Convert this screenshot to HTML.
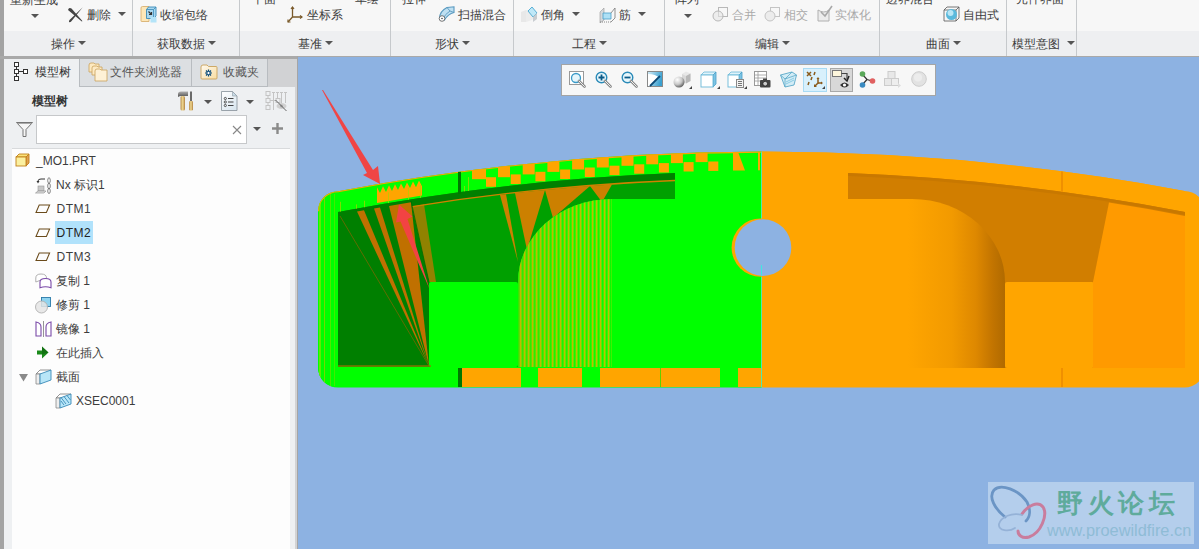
<!DOCTYPE html>
<html><head><meta charset="utf-8">
<style>
*{margin:0;padding:0;box-sizing:border-box}
html,body{width:1199px;height:549px;overflow:hidden;background:#8db2e2;font-family:"Liberation Sans",sans-serif;font-size:12px;color:#3c3c3c}
.a{position:absolute}
.t{position:absolute;white-space:nowrap;line-height:14px;font-size:12px}
.sep{position:absolute;top:0;width:1px;height:56px;background:#c6c9cc}
.dd{position:absolute;width:0;height:0;border-left:4px solid transparent;border-right:4px solid transparent;border-top:4px solid #555}
</style></head><body>
<!-- ribbon -->
<div class="a" style="left:0;top:0;width:1199px;height:31px;background:#f7f7f7"></div>
<div class="a" style="left:0;top:31px;width:1199px;height:25px;background:#eeeff1"></div>
<div class="a" style="left:0;top:56px;width:1199px;height:1px;background:#a9a9a9"></div>
<div class="a" style="left:0;top:0;width:4px;height:549px;background:#a3a3a3"></div>


<!-- ribbon content -->
<div class="sep" style="left:132px"></div>
<div class="sep" style="left:239px"></div>
<div class="sep" style="left:390px"></div>
<div class="sep" style="left:513px"></div>
<div class="sep" style="left:664px"></div>
<div class="sep" style="left:879px"></div>
<div class="sep" style="left:1006px"></div>
<div class="sep" style="left:1076px"></div>

<div class="t" style="left:10px;top:-7px">重新生成</div>
<div class="dd" style="left:31px;top:14px"></div>
<svg class="a" style="left:67px;top:6px" width="17" height="17" viewBox="0 0 17 17"><path d="M1.2 3.2 Q2.5 1 4.5 2.5 L15.2 14.8 Q15.5 15.8 14.5 15.2 L2.2 5 Q0.8 4.2 1.2 3.2Z" fill="#444"/><path d="M15.8 1.2 L3.8 12.8 Q1.2 15.2 2.2 16 Q3.5 16.8 5.2 14.2 Z" fill="#444"/></svg>
<div class="t" style="left:87px;top:8px">删除</div>
<div class="dd" style="left:118px;top:12px"></div>

<svg class="a" style="left:140px;top:5px" width="17" height="18" viewBox="0 0 17 18"><path d="M1 3 Q1 1.5 2.5 1.5 L9 1.5 L9 16.5 L1.5 16.5 Q1 16.5 1 16Z" fill="#fde7b8" stroke="#d8b070" stroke-width="0.9"/><path d="M6.5 4.5 L8.5 2 L16 2 L16 11 L13.5 13.5 L6.5 13.5Z" fill="#a8d8f0" stroke="#3a8ab8" stroke-width="0.9"/><path d="M6.5 4.5 L13.5 4.5 L13.5 13.5 M13.5 4.5 L16 2" fill="none" stroke="#3a8ab8" stroke-width="0.8"/><path d="M8.5 6.5 L11.5 9.5 M11.5 7 L11.5 9.5 L9 9.5" stroke="#333" stroke-width="1.2" fill="none"/><rect x="10.5" y="12" width="6" height="5.5" fill="#b4e4f8"/></svg>
<div class="t" style="left:160px;top:8px">收缩包络</div>

<div class="t" style="left:252px;top:-8px">平面</div>
<div class="t" style="left:355px;top:-8px">草绘</div>
<svg class="a" style="left:287px;top:6px" width="17" height="17" viewBox="0 0 17 17"><path d="M5.5 1 L5.5 11 L15 11 M5.5 11 L1 16" stroke="#7a5a2a" stroke-width="1.3" fill="none"/><path d="M4 3 L5.5 1 L7 3 M13 9.5 L15 11 L13 12.5 M1 13.5 L1 16 L3.5 16" stroke="#7a5a2a" stroke-width="1.2" fill="none"/></svg>
<div class="t" style="left:307px;top:8px">坐标系</div>

<div class="t" style="left:402px;top:-8px">拉伸</div>
<svg class="a" style="left:438px;top:6px" width="17" height="16" viewBox="0 0 17 16"><path d="M1.5 12 Q2 5 9 1.5 L16 0.8 L16 6.5 Q10 8 6.5 14Z" fill="#bfe0f2" stroke="#5a9ac0" stroke-width="1.1"/><path d="M9 1.5 L12 5 L16 6.5 M12 5 Q7 8 5 13" fill="none" stroke="#5a9ac0" stroke-width="0.9"/><circle cx="4" cy="12.5" r="2.8" fill="#fff" stroke="#666" stroke-width="0.9"/><circle cx="4" cy="12.5" r="0.7" fill="#222"/></svg>
<div class="t" style="left:458px;top:8px">扫描混合</div>

<svg class="a" style="left:520px;top:6px" width="18" height="17" viewBox="0 0 18 17"><path d="M1 6 L6 4 L6 16 L1 16Z" fill="#e8e8e8"/><path d="M6 4 L13 4 L17 9 L12 14 L6 16Z" fill="#ececec"/><path d="M8 5 L12 1 L17 7 L13 11Z" fill="#bfe8f8" stroke="#4aa8d0" stroke-width="0.9"/><path d="M13 11 L17 7 L17 13 L13 16Z" fill="#c8ccd0"/></svg>
<div class="t" style="left:541px;top:8px">倒角</div>
<div class="dd" style="left:572px;top:12px"></div>
<svg class="a" style="left:599px;top:6px" width="17" height="17" viewBox="0 0 17 17"><path d="M1 6 L5 2 L5 14 L1 17Z" fill="#d5d8db" stroke="#999" stroke-width="0.6"/><path d="M4 7 L12 7 L12 13 L4 13Z" fill="#aee0f5" stroke="#4aa0c8" stroke-width="0.8"/><path d="M12 7 L16 2 L16 12 L12 16" fill="none" stroke="#777" stroke-width="0.8"/><path d="M1 16 L12 16" stroke="#888" stroke-dasharray="1 1"/></svg>
<div class="t" style="left:619px;top:8px">筋</div>
<div class="dd" style="left:638px;top:12px"></div>

<div class="t" style="left:675px;top:-8px">阵列</div>
<div class="dd" style="left:684px;top:14px"></div>
<svg class="a" style="left:712px;top:6px" width="17" height="16" viewBox="0 0 17 16"><rect x="6.5" y="1.5" width="9" height="9" fill="none" stroke="#b8b8b8"/><circle cx="6" cy="10" r="5" fill="#e6e6e6" fill-opacity="0.6" stroke="#b8b8b8"/></svg>
<div class="t" style="left:732px;top:8px;color:#a9a9a9">合并</div>
<svg class="a" style="left:764px;top:6px" width="17" height="16" viewBox="0 0 17 16"><rect x="6.5" y="1.5" width="9" height="9" fill="none" stroke="#c4c4c4"/><circle cx="6" cy="10" r="5" fill="#ececec" stroke="#c4c4c4"/></svg>
<div class="t" style="left:784px;top:8px;color:#a9a9a9">相交</div>
<svg class="a" style="left:816px;top:5px" width="17" height="17" viewBox="0 0 17 17"><path d="M2 5 L2 16 L13 16 L13 5 Q8 9 2 5Z" fill="#ececec" stroke="#b0b0b0"/><path d="M5 7 L9 11 L16 1" stroke="#a8a8a8" stroke-width="1.6" fill="none"/></svg>
<div class="t" style="left:835px;top:8px;color:#a9a9a9">实体化</div>

<div class="t" style="left:886px;top:-8px">边界混合</div>
<svg class="a" style="left:943px;top:6px" width="17" height="16" viewBox="0 0 17 16"><path d="M1 4 L4 1 L16 1 L16 12 L13 15 L1 15Z M1 4 L13 4 L13 15 M13 4 L16 1" fill="none" stroke="#555" stroke-width="0.8"/><circle cx="8.5" cy="8.5" r="5.5" fill="#5ab9dc"/><circle cx="7.5" cy="7" r="3" fill="#b9e6f5"/></svg>
<div class="t" style="left:963px;top:8px">自由式</div>

<div class="t" style="left:1016px;top:-8px">元件界面</div>

<div class="t" style="left:51px;top:37px">操作</div><div class="dd" style="left:78px;top:41px"></div>
<div class="t" style="left:157px;top:37px">获取数据</div><div class="dd" style="left:208px;top:41px"></div>
<div class="t" style="left:298px;top:37px">基准</div><div class="dd" style="left:325px;top:41px"></div>
<div class="t" style="left:435px;top:37px">形状</div><div class="dd" style="left:462px;top:41px"></div>
<div class="t" style="left:572px;top:37px">工程</div><div class="dd" style="left:599px;top:41px"></div>
<div class="t" style="left:755px;top:37px">编辑</div><div class="dd" style="left:782px;top:41px"></div>
<div class="t" style="left:926px;top:37px">曲面</div><div class="dd" style="left:953px;top:41px"></div>
<div class="t" style="left:1012px;top:37px">模型意图</div><div class="dd" style="left:1067px;top:41px"></div>

<!-- left panel -->
<div class="a" style="left:4px;top:56px;width:294px;height:493px;background:#eef0f2"></div>
<div class="a" style="left:0;top:56px;width:298px;height:3px;background:#a9a9a9"></div>
<div class="a" style="left:295px;top:86px;width:2px;height:463px;background:#d2d3d5"></div>
<div class="a" style="left:297px;top:56px;width:1px;height:493px;background:#a5a5a5"></div>
<div class="a" style="left:12px;top:148px;width:278px;height:401px;background:#fdfdfd;border-top:1px solid #d8dadc"></div>


<!-- tabs -->
<div class="a" style="left:79px;top:59px;width:112px;height:28px;background:#dcdfe2;border-left:1px solid #b8bcc0;border-bottom:1px solid #b8bcc0"></div>
<div class="a" style="left:191px;top:59px;width:77px;height:28px;background:#dcdfe2;border-left:1px solid #b8bcc0;border-bottom:1px solid #b8bcc0;border-right:1px solid #b8bcc0"></div>
<div class="a" style="left:268px;top:59px;width:29px;height:28px;background:#d1d2d4"></div>
<svg class="a" style="left:14px;top:62px" width="15" height="20" viewBox="0 0 15 20"><g fill="#fff" stroke="#333" stroke-width="1"><rect x="0.5" y="0.5" width="4" height="4"/><rect x="0.5" y="7.5" width="4" height="4"/><rect x="0.5" y="14.5" width="4" height="4"/><rect x="9.5" y="7.5" width="4" height="4"/></g><path d="M2.5 4.5 V7.5 M2.5 11.5 V14.5 M4.5 9.5 H9.5" stroke="#333"/></svg>
<div class="t" style="left:35px;top:65px;color:#333">模型树</div>
<svg class="a" style="left:88px;top:62px" width="20" height="20" viewBox="0 0 20 20"><g stroke="#c9a15a" stroke-width="0.8"><path d="M1 3 Q1 1 3 1 L6 1 L7 2 L11 2 L11 10 L1 10Z" fill="#fde9c0"/><path d="M4 6 Q4 4 6 4 L9 4 L10 5 L14 5 L14 13 L4 13Z" fill="#fdeac4"/><path d="M7 9 Q7 7 9 7 L12 7 L13 8 L19 8 L19 19 L7 19Z" fill="#fef1d6"/></g></svg>
<div class="t" style="left:110px;top:65px;color:#555">文件夹浏览器</div>
<svg class="a" style="left:200px;top:64px" width="18" height="16" viewBox="0 0 18 16"><defs><linearGradient id="fd" x1="0" y1="0" x2="1" y2="1"><stop offset="0" stop-color="#fffaf0"/><stop offset="1" stop-color="#f8dca0"/></linearGradient></defs><path d="M1 3 Q1 1 3 1 L7 1 L8.5 2.5 L16 2.5 Q17 2.5 17 3.5 L17 14 Q17 15 16 15 L2 15 Q1 15 1 14Z" fill="url(#fd)" stroke="#c9a15a" stroke-width="0.9"/><g stroke="#0a4a78" stroke-width="1.2"><path d="M8.5 5.5 V12.5 M5 9 H12 M6 6.5 L11 11.5 M11 6.5 L6 11.5"/></g><circle cx="8.5" cy="9" r="1.6" fill="#fff" stroke="#0a4a78" stroke-width="0.8"/></svg>
<div class="t" style="left:223px;top:65px;color:#555">收藏夹</div>

<div class="t" style="left:32px;top:94px;color:#333;font-weight:bold">模型树</div>
<svg class="a" style="left:177px;top:91px" width="18" height="20" viewBox="0 0 18 20"><defs><linearGradient id="wd" x1="0" y1="0" x2="1" y2="0"><stop offset="0" stop-color="#b89050"/><stop offset="0.5" stop-color="#f0d890"/><stop offset="1" stop-color="#b08040"/></linearGradient><linearGradient id="hm" x1="0" y1="0" x2="0" y2="1"><stop offset="0" stop-color="#b0b0b0"/><stop offset="1" stop-color="#505050"/></linearGradient></defs><path d="M1 3 Q1 0.5 4 0.5 L11 0.5 L11 5 L4 5 Q2.5 5 1 6Z" fill="url(#hm)"/><rect x="3.5" y="5" width="4.5" height="14.5" rx="1.5" fill="url(#wd)"/><rect x="13" y="0.5" width="2" height="10" fill="#6a6a6a"/><rect x="12" y="10" width="4" height="9.5" rx="1.2" fill="url(#wd)"/></svg>
<div class="dd" style="left:204px;top:100px"></div>
<svg class="a" style="left:221px;top:91px" width="17" height="21" viewBox="0 0 17 21"><defs><linearGradient id="pg" x1="0" y1="0" x2="0.6" y2="1"><stop offset="0" stop-color="#ffffff"/><stop offset="1" stop-color="#dce8f0"/></linearGradient></defs><path d="M0.5 0.5 L11.5 0.5 L16 5 L16 19.5 L0.5 19.5Z" fill="url(#pg)" stroke="#909aa2" stroke-width="0.9"/><path d="M11.5 0.5 L11.5 5 L16 5Z" fill="#c8dce8" stroke="#909aa2" stroke-width="0.6"/><g fill="none" stroke="#444" stroke-width="0.9"><circle cx="4.3" cy="7.5" r="1.1"/><circle cx="4.3" cy="11" r="1.1"/><circle cx="4.3" cy="14.5" r="1.1"/></g><path d="M7 7.5 H12.5 M7 11 H12.5 M7 14.5 H12.5" stroke="#444" stroke-width="1.1"/></svg>
<div class="dd" style="left:246px;top:100px"></div>
<svg class="a" style="left:265px;top:91px" width="23" height="21" viewBox="0 0 23 21"><g fill="none" stroke="#c4c4c4" stroke-width="1"><rect x="1" y="0.5" width="4" height="4"/><rect x="1" y="7.5" width="4" height="4"/><rect x="1" y="14.5" width="4" height="4"/><rect x="11" y="7.5" width="4" height="4"/><path d="M3 4.5 V7.5 M3 11.5 V14.5 M5 9.5 H11 M8.5 1.5 V19 M7 1.5 H10 M12.5 1.5 V7 M11 1.5 H14 M16.5 1.5 V12 M15 1.5 H18 M20.5 1.5 V12 M19 1.5 H22"/></g><ellipse cx="16.5" cy="15" rx="5" ry="3" fill="#d0d0d0"/><circle cx="16.5" cy="15" r="1.5" fill="#a8a8a8"/><path d="M10.5 9 L21.5 20" stroke="#555" stroke-width="0.9"/></svg>

<svg class="a" style="left:16px;top:122px" width="17" height="15" viewBox="0 0 17 15"><path d="M0.5 0.5 L16.5 0.5 L10 7.5 L10 14.5 L7 14.5 L7 7.5Z" fill="#f6f6f6" stroke="#666" stroke-width="0.9"/><path d="M1.5 1.5 L15.5 1.5" stroke="#aaa"/></svg>
<div class="a" style="left:36px;top:115px;width:211px;height:29px;background:#fff;border:1px solid #c6c8ca"></div>
<svg class="a" style="left:232px;top:125px" width="10" height="10" viewBox="0 0 10 10"><path d="M1 1 L9 9 M9 1 L1 9" stroke="#888" stroke-width="1.1"/></svg>
<div class="dd" style="left:253px;top:127px"></div>
<svg class="a" style="left:272px;top:123px" width="11" height="11" viewBox="0 0 11 11"><path d="M5.5 0 V11 M0 5.5 H11" stroke="#8a8a8a" stroke-width="2.4"/></svg>

<!-- tree -->
<svg class="a" style="left:15px;top:153px" width="15" height="14" viewBox="0 0 15 14"><path d="M1 4 L4 1 L14 1 L11 4Z" fill="#fbe37a" stroke="#c0801a" stroke-width="0.9"/><path d="M11 4 L14 1 L14 10 L11 13Z" fill="#e0a050" stroke="#c0801a" stroke-width="0.9"/><rect x="1" y="4" width="10" height="9" fill="#fbf0a0" stroke="#c0801a" stroke-width="0.9"/></svg>
<div class="t" style="left:36px;top:154px">_MO1.PRT</div>

<svg class="a" style="left:35px;top:177px" width="17" height="17" viewBox="0 0 17 17"><path d="M3 4 Q3 2 6 2 L10 2" fill="none" stroke="#333" stroke-width="1"/><path d="M1.5 4 L3 6.5 L4.5 4Z" fill="#333"/><rect x="3" y="9" width="6" height="5" fill="#c8c8c8" stroke="#999" stroke-width="0.6"/><path d="M0.5 16 L3 14 L11 14 L9 16Z" fill="#e0e0e0" stroke="#888" stroke-width="0.6"/><g fill="none" stroke="#666" stroke-width="0.8"><ellipse cx="14" cy="3.5" rx="1.3" ry="2.8"/><ellipse cx="14" cy="9" rx="1.3" ry="2.8"/><ellipse cx="14" cy="14" rx="1.3" ry="2.5"/></g></svg>
<div class="t" style="left:56px;top:178px">Nx 标识1</div>

<svg class="a" style="left:35px;top:204px" width="16" height="10" viewBox="0 0 16 10"><path d="M4.2 1 L14.6 1 L11.4 8.5 L1 8.5Z" fill="none" stroke="#6a4a1a" stroke-width="1.05"/></svg>
<div class="t" style="left:56.5px;top:202px;letter-spacing:0.5px">DTM1</div>
<div class="a" style="left:55px;top:221px;width:38px;height:23px;background:#b1e2fb"></div>
<svg class="a" style="left:35px;top:228px" width="16" height="10" viewBox="0 0 16 10"><path d="M4.2 1 L14.6 1 L11.4 8.5 L1 8.5Z" fill="none" stroke="#6a4a1a" stroke-width="1.05"/></svg>
<div class="t" style="left:56.5px;top:226px;color:#222;letter-spacing:0.5px">DTM2</div>
<svg class="a" style="left:35px;top:252px" width="16" height="10" viewBox="0 0 16 10"><path d="M4.2 1 L14.6 1 L11.4 8.5 L1 8.5Z" fill="none" stroke="#6a4a1a" stroke-width="1.05"/></svg>
<div class="t" style="left:56.5px;top:250px;letter-spacing:0.5px">DTM3</div>

<svg class="a" style="left:35px;top:273px" width="17" height="16" viewBox="0 0 17 16"><path d="M0.8 9 L0.8 5 Q0.8 1 6 1 Q11.5 1 11.5 5 L11.5 7 Q6 6 0.8 9Z" fill="#fff" stroke="#a8a8a8" stroke-width="0.9"/><path d="M5 14.8 L5 9 Q5 5.5 10.5 5.5 Q16 5.5 16 9 L16 14.8 Q10.5 12.8 5 14.8Z" fill="#fff" stroke="#7a4aa8" stroke-width="1.1"/></svg>
<div class="t" style="left:56px;top:274px">复制 1</div>
<svg class="a" style="left:35px;top:297px" width="17" height="17" viewBox="0 0 17 17"><rect x="6.5" y="0.5" width="9" height="9" fill="#8fd4f0" stroke="#2a7aa8" stroke-width="0.9"/><circle cx="6.5" cy="10" r="6" fill="#e4e4e4" fill-opacity="0.85" stroke="#b0b0b0" stroke-width="0.9"/></svg>
<div class="t" style="left:56px;top:298px">修剪 1</div>
<svg class="a" style="left:35px;top:321px" width="17" height="16" viewBox="0 0 17 16"><path d="M1 1 L1 15 L6 15 L6 6 Q6 2 1 1Z M16 1 L16 15 L11 15 L11 6 Q11 2 16 1Z" fill="#fff" stroke="#7a4aa8" stroke-width="1.1"/><path d="M8.5 0 V16" stroke="#888" stroke-width="0.9"/></svg>
<div class="t" style="left:56px;top:322px">镜像 1</div>
<svg class="a" style="left:37px;top:346px" width="12" height="13" viewBox="0 0 12 13"><path d="M0 4.5 L5 4.5 L5 0.5 L11.5 6.5 L5 12.5 L5 8.5 L0 8.5Z" fill="#1a8a1a"/><path d="M5 0.5 L11.5 6.5 L5 8.5Z" fill="#0a5a0a" opacity="0.5"/></svg>
<div class="t" style="left:56px;top:346px">在此插入</div>

<svg class="a" style="left:19px;top:374px" width="10" height="8" viewBox="0 0 10 8"><path d="M0 0 L9 0 L4.5 7.5Z" fill="#8a8a8a"/></svg>
<svg class="a" style="left:35px;top:369px" width="17" height="16" viewBox="0 0 17 16"><path d="M1 5 L5 1 L16 1 L12 5Z" fill="#fff" stroke="#777" stroke-width="0.8"/><path d="M1 5 L5 5 L5 15 L1 15Z" fill="#eee" stroke="#888" stroke-width="0.8"/><path d="M5 5 L16 1 L16 11 L5 15Z" fill="#b8e6f8" stroke="#3a8ab8" stroke-width="0.9"/></svg>
<div class="t" style="left:56px;top:370px">截面</div>
<svg class="a" style="left:55px;top:393px" width="17" height="16" viewBox="0 0 17 16"><path d="M1 5 L5 1 L16 1 L12 5Z" fill="#fff" stroke="#777" stroke-width="0.8"/><path d="M1 5 L5 5 L5 15 L1 15Z" fill="#eee" stroke="#888" stroke-width="0.8"/><path d="M5 5 L16 1 L16 11 L5 15Z" fill="#b8e6f8" stroke="#3a8ab8" stroke-width="0.9"/><path d="M6 8 L9 12 M6 4.5 L11 11 M9 3.5 L14 10 M12 2.5 L15.5 7" stroke="#3a8ab8" stroke-width="0.9"/></svg>
<div class="t" style="left:76px;top:394px">XSEC0001</div>

<!-- viewport -->
<div class="a" style="left:298px;top:57px;width:901px;height:492px;background:#8db2e2"></div>

<!-- model -->
<svg class="a" style="left:0;top:0" width="1199" height="549" viewBox="0 0 1199 549">
<defs>
<clipPath id="bc"><path d="M318,367 L318,211.2 A20,20 0 0 1 338,191.2 Q761.2,112.2 1184.5,190.9 A20,20 0 0 1 1204.5,210.9 L1204.5,367.5 A20,20 0 0 1 1184.5,387.5 L338,387.5 A20,20 0 0 1 318,367.5 Z"/></clipPath>
<linearGradient id="fg" x1="762" y1="0" x2="1005" y2="0" gradientUnits="userSpaceOnUse"><stop offset="0" stop-color="#ffa500"/><stop offset="0.6" stop-color="#ffa500"/><stop offset="0.78" stop-color="#f29a00"/><stop offset="0.88" stop-color="#de8800"/><stop offset="0.95" stop-color="#c27400"/><stop offset="1" stop-color="#b06a00"/></linearGradient>
<pattern id="st" x="516" y="0" width="4" height="10" patternUnits="userSpaceOnUse"><rect width="4" height="10" fill="#08fc00"/><rect x="0" width="1" height="10" fill="#c0c000"/><rect x="1" width="1" height="10" fill="#60e800"/><rect x="3" width="1" height="10" fill="#40f000"/></pattern>
<linearGradient id="fo" x1="518" y1="0" x2="612" y2="0" gradientUnits="userSpaceOnUse"><stop offset="0" stop-color="#c8a000" stop-opacity="0.25"/><stop offset="0.5" stop-color="#b0b000" stop-opacity="0.1"/><stop offset="1" stop-color="#a0c000" stop-opacity="0"/></linearGradient>
</defs>
<g clip-path="url(#bc)">
<rect x="300" y="100" width="462" height="300" fill="#00ff00"/>
<rect x="762" y="100" width="450" height="300" fill="#ffa500"/>
<path d="M318,211.2 A20,20 0 0 1 338,191.2 Q761.2,112.2 1184.5,190.9" fill="none" stroke="#ffa500" stroke-width="2"/>
<path d="M848,173 Q1016.5,179.6 1185,211.9 L1185,368 L848,368 Z" fill="#d17e00"/>
<path d="M848,173 Q1016.5,179.6 1185,211.9 L1185,214.9 Q1016.5,182.6 848,176 Z" fill="#c87800"/>
<path d="M762,199 L912,199 A93,83 0 0 1 1005,282 L1005,368 L762,368 Z" fill="url(#fg)"/>
<rect x="1005" y="282" width="89" height="86" rx="2" fill="#ffa500"/>
<path d="M1109,202.6 Q1147,208.6 1185,215.9 L1185,368 L1093,368 L1093,282 Z" fill="#ff9a00"/>
<rect x="1061" y="368" width="2" height="19" fill="#f09000"/>
<rect x="1061" y="171.4" width="2" height="20.3" fill="#f09000"/>
<path d="M338,212.1 Q506.5,179.7 675,173 L675,368 L338,368 Z" fill="#00a000"/>
<path d="M500,194.9 L506,194.2 L518,262 Z" fill="#cc8000"/>
<path d="M515,193.1 L545,190 L527,250 Z" fill="#cc8000"/>
<path d="M545,190 L590,186 L553,218 Z" fill="#cc8000"/>
<path d="M590,186 L612,184.4 L602,202 Z" fill="#cc8000"/>
<path d="M411,206.3 L424,204.2 L436,282 L429,282 Z" fill="#c07800" opacity="0.75"/>
<path d="M338,212.1 Q506.5,179.7 675,173 L675,180 Q506.5,186.7 338,219.1 Z" fill="#007f00"/>
<path d="M411,206.8 Q543,185.7 675,180.5" fill="none" stroke="#d08000" stroke-width="1.3"/>
<path d="M762,199 L612,199 A94,83 0 0 0 518,282 L518,368 L762,368 Z" fill="#00ff00"/>
<path d="M612,199 A94,83 0 0 0 518,282 L518,368 L612,368 Z" fill="url(#st)"/>
<path d="M612,199 A94,83 0 0 0 518,282 L518,368 L612,368 Z" fill="url(#fo)"/>
<path d="M338,215.1 L411,202.3 L429,282 L429,366 L338,366 Z" fill="#007f00"/>
<path d="M429,366 L357,211.5 L364,210.3 Z" fill="#c07000"/>
<path d="M429,366 L374,208.5 L380,207.4 Z" fill="#c07000"/>
<path d="M429,366 L389,205.9 L411,202.3 Z" fill="#c07000"/>
<path d="M429,366 L340,216" stroke="#a06000" stroke-width="0.6"/>
<path d="M429,282 L411,201" stroke="#006a00" stroke-width="0.8"/>
<rect x="429" y="282" width="89" height="85" rx="2" fill="#00ff00"/>
<rect x="338" y="365" width="93" height="2" fill="#a07000" opacity="0.6"/>
<path d="M399,204.5 L412.5,216.5 L407.5,219 L429.5,289 L400.5,221.5 L396,222.5 Z" fill="#f24343"/>
<rect x="318" y="367" width="444" height="20" fill="#00ff00"/>
<rect x="462" y="368" width="59" height="19" fill="#ffa500"/>
<rect x="538" y="368" width="44" height="19" fill="#ffa500"/>
<rect x="600" y="368" width="60" height="19" fill="#ffa500"/>
<rect x="661" y="368" width="59" height="19" fill="#ffa500"/>
<rect x="738" y="368" width="23" height="19" fill="#ffa500"/>
<rect x="458" y="368" width="4" height="19" fill="#007800"/>
<rect x="660" y="368" width="1" height="19" fill="#60d000"/>
<rect x="319" y="200" width="2" height="186" fill="#a0e000" opacity="0.6"/><rect x="324" y="196" width="1" height="190" fill="#c0c000" opacity="0.6"/><rect x="330" y="194" width="1" height="192" fill="#a0d000" opacity="0.5"/><rect x="334" y="194" width="1" height="192" fill="#a0d000" opacity="0.4"/>
<path d="M377,202.9 L377,187.3 L380,193 L383,186.3 L386,192 L389,185.3 L392,191 L395,184.3 L398,190 L401,183.4 L404,189.1 L407,182.4 L410,188.1 L413,181.5 L416,187.2 L419,180.6 L422,186.3 L422,195.5 Z" fill="#ffa500"/>
<rect x="340" y="201.8" width="1" height="9.9" fill="#b0d000" opacity="0.7"/>
<rect x="356" y="204.4" width="1" height="4.3" fill="#b0d000" opacity="0.7"/>
<rect x="364" y="200.7" width="1" height="6.6" fill="#b0d000" opacity="0.7"/>
<rect x="388" y="192.4" width="1" height="10.7" fill="#b0d000" opacity="0.7"/>
<rect x="408" y="187.8" width="1" height="11.9" fill="#b0d000" opacity="0.7"/>
<rect x="420" y="184.9" width="1" height="13" fill="#b0d000" opacity="0.7"/>
<rect x="464" y="186" width="1" height="5.4" fill="#b0d000" opacity="0.7"/>
<rect x="468" y="177.1" width="1" height="13.9" fill="#b0d000" opacity="0.7"/>
<rect x="486" y="177.2" width="10" height="9.6" fill="#ffa500"/>
<rect x="498" y="166.2" width="12" height="11" fill="#ffa500"/>
<rect x="510.7" y="174.4" width="10" height="9.6" fill="#ffa500"/>
<rect x="522.7" y="163.6" width="12" height="10.8" fill="#ffa500"/>
<rect x="535.4" y="171.8" width="10" height="9.5" fill="#ffa500"/>
<rect x="547.4" y="161.2" width="12" height="10.7" fill="#ffa500"/>
<rect x="560.1" y="169.5" width="10" height="9.5" fill="#ffa500"/>
<rect x="572.1" y="159" width="12" height="10.5" fill="#ffa500"/>
<rect x="584.8" y="167.5" width="10" height="9.5" fill="#ffa500"/>
<rect x="596.8" y="157.2" width="12" height="10.3" fill="#ffa500"/>
<rect x="609.5" y="165.7" width="10" height="9.4" fill="#ffa500"/>
<rect x="621.5" y="155.6" width="12" height="10.2" fill="#ffa500"/>
<rect x="634.2" y="164.3" width="10" height="9.4" fill="#ffa500"/>
<rect x="646.2" y="154.3" width="12" height="10" fill="#ffa500"/>
<rect x="658.9" y="163.1" width="10" height="9.4" fill="#ffa500"/>
<rect x="670.9" y="153.2" width="12" height="9.9" fill="#ffa500"/>
<rect x="683.6" y="162.1" width="10" height="9.4" fill="#ffa500"/>
<rect x="695.6" y="152.4" width="12" height="9.7" fill="#ffa500"/>
<rect x="708.3" y="161.5" width="10" height="9.4" fill="#ffa500"/>
<rect x="472" y="169.1" width="14" height="10.1" fill="#ffa500"/>
<path d="M733,151.8 L738,151.7 L745,170.4 L733,170.5 Z" fill="#ffa500"/>
<rect x="758" y="151.6" width="2" height="18.7" fill="#ffa500"/>
<rect x="458" y="171.8" width="3" height="22.3" fill="#007800"/>
<rect x="761" y="150" width="1" height="240" fill="#50e8b0"/>
</g>
<circle cx="760.8" cy="247.6" r="29.2" fill="#ffa500"/><circle cx="763" cy="247.6" r="28.3" fill="#8db2e2"/><rect x="761" y="265" width="1" height="11" fill="#40e8e0"/>
<path d="M322,90 L367,173 L363,175 L380,184 L378,166 L373,170 L323,90 Z" fill="#f04545"/>
</svg>
<!-- /model -->


<!-- watermark -->
<div class="a" style="left:988px;top:482px;width:206px;height:62px;background:#b4ceec"></div>
<svg class="a" style="left:986px;top:480px" width="70" height="66" viewBox="986 480 70 66"><path d="M1005,517 C995,509 988,497 994,490 C1001,483 1019,490 1027,502 C1031,510 1030,517 1026,521" fill="none" stroke="#6b95c5" stroke-width="2.8" stroke-linecap="round"/><path d="M1022,514 C1028,505 1038,501 1043,507 C1048,515 1041,533 1029,537 C1022,539 1018,535 1018,531" fill="none" stroke="#c97d9d" stroke-width="3" stroke-linecap="round"/><path d="M1022,515 C1012,512 1001,517 999,524 C998,531 1009,532 1015,528" fill="none" stroke="#95b2d7" stroke-width="1.8" stroke-linecap="round"/></svg>
<div class="a" style="left:1057px;top:487px;font-size:26px;line-height:32px;color:#5fab9c;font-weight:bold;white-space:nowrap;letter-spacing:4.5px">野火论坛</div>
<div class="a" style="left:1047px;top:521px;font-size:17px;line-height:20px;color:#8fbcd6;white-space:nowrap;transform:scaleX(0.96);transform-origin:0 0">www.proewildfire.cn</div>

<!-- toolbar -->
<div class="a" style="left:561px;top:64px;width:375px;height:32px;background:#f7f7f7;border:1px solid #a5a5a5"></div>
<svg class="a" style="left:569px;top:71px" width="17" height="17" viewBox="0 0 17 17"><rect x="0.5" y="0.5" width="14" height="13" fill="#fff" stroke="#999"/><circle cx="7" cy="7" r="4.5" fill="#e6f6fc" stroke="#3a9ac8" stroke-width="1.3"/><path d="M10 10 L15.5 15.5" stroke="#888" stroke-width="2.6" stroke-linecap="round"/><path d="M10 10 L15.5 15.5" stroke="#eee" stroke-width="1" stroke-linecap="round"/></svg>
<svg class="a" style="left:595px;top:71px" width="17" height="17" viewBox="0 0 17 17"><circle cx="6.5" cy="6.5" r="5.3" fill="#e6f6fc" stroke="#2a8ab8" stroke-width="1.4"/><path d="M6.5 3.5 V9.5 M3.5 6.5 H9.5" stroke="#0a5a88" stroke-width="1.8"/><path d="M10 10 L15.5 15.5" stroke="#888" stroke-width="2.6" stroke-linecap="round"/><path d="M10 10 L15.5 15.5" stroke="#eee" stroke-width="1" stroke-linecap="round"/></svg>
<svg class="a" style="left:621px;top:71px" width="17" height="17" viewBox="0 0 17 17"><circle cx="6.5" cy="6.5" r="5.3" fill="#e6f6fc" stroke="#2a8ab8" stroke-width="1.4"/><path d="M3.5 6.5 H9.5" stroke="#0a5a88" stroke-width="1.8"/><path d="M10 10 L15.5 15.5" stroke="#888" stroke-width="2.6" stroke-linecap="round"/><path d="M10 10 L15.5 15.5" stroke="#eee" stroke-width="1" stroke-linecap="round"/></svg>
<svg class="a" style="left:647px;top:71px" width="17" height="17" viewBox="0 0 17 17"><defs><linearGradient id="rp" x1="0" y1="0" x2="1" y2="0.3"><stop offset="0" stop-color="#d8eef8"/><stop offset="1" stop-color="#3aa0d0"/></linearGradient><radialGradient id="sp" cx="0.35" cy="0.3" r="0.7"><stop offset="0" stop-color="#fff"/><stop offset="0.6" stop-color="#c8c8c8"/><stop offset="1" stop-color="#6a6a6a"/></radialGradient></defs><rect x="0.5" y="0.5" width="15" height="15" fill="url(#rp)" stroke="#888"/><path d="M1 3 Q9 3 12 7 L3 15 L1 15Z" fill="#fff"/><path d="M3 15 L13 5" stroke="#0a4a78" stroke-width="1.8"/></svg>
<svg class="a" style="left:672px;top:71px" width="21" height="19" viewBox="0 0 21 19"><path d="M10 3 L14 0.5 L18.5 2.5 L18.5 10 L14 12.5 L10 10Z" fill="#e8e8e8"/><path d="M14 5 L18.5 2.5 L18.5 10 L14 12.5Z" fill="#b8b8b8"/><path d="M10 3 L14 5 L14 12.5 L10 10Z" fill="#d8d8d8"/><circle cx="7" cy="11" r="5.5" fill="url(#sp)"/><path d="M17 18 L20 15 L20 18Z" fill="#444"/></svg>
<svg class="a" style="left:700px;top:71px" width="21" height="19" viewBox="0 0 21 19"><path d="M1 4 L4 1 L16 1 L13 4Z" fill="#dff3fb" stroke="#6ab8d8" stroke-width="0.8"/><path d="M13 4 L16 1 L16 13 L13 16Z" fill="#7cc4e4" stroke="#4aa0c8" stroke-width="0.8"/><rect x="1" y="4" width="12" height="12" fill="#fff" stroke="#6ab8d8" stroke-width="0.9"/><path d="M17 18 L20 15 L20 18Z" fill="#444"/></svg>
<svg class="a" style="left:727px;top:71px" width="21" height="19" viewBox="0 0 21 19"><path d="M1 4 L4 1 L15 1 L12 4Z" fill="#dff3fb" stroke="#6ab8d8" stroke-width="0.8"/><path d="M12 4 L15 1 L15 13 L12 16Z" fill="#7cc4e4" stroke="#4aa0c8" stroke-width="0.8"/><rect x="1" y="4" width="11" height="12" fill="#fff" stroke="#6ab8d8" stroke-width="0.9"/><rect x="9.5" y="8.5" width="7" height="8" fill="#f4f4f4" stroke="#888"/><path d="M11 10.5 H15 M11 12.5 H15 M11 14.5 H15" stroke="#555" stroke-width="0.8"/><path d="M17 18 L20 15 L20 18Z" fill="#444"/></svg>
<svg class="a" style="left:754px;top:71px" width="17" height="17" viewBox="0 0 17 17"><rect x="0.5" y="0.5" width="12" height="14" fill="#fff" stroke="#999"/><path d="M0.5 4 H12.5 M0.5 7 H12.5 M0.5 10 H12.5 M4 0.5 V14.5" stroke="#999" stroke-width="0.8"/><rect x="6" y="9" width="10.5" height="7.5" rx="1" fill="#444"/><rect x="9" y="7.5" width="4" height="2" fill="#444"/><circle cx="11.2" cy="12.7" r="2.4" fill="#ccc" stroke="#222" stroke-width="0.8"/></svg>
<svg class="a" style="left:780px;top:71px" width="17" height="17" viewBox="0 0 17 17"><path d="M0.5 4 L12 1 L16.5 4 L14 14 L5 16 L0.5 4Z" fill="#d2ecf6" stroke="#5aa8c8" stroke-width="0.9"/><path d="M0.5 4 L5 8 L16.5 4 M5 8 L5 16 M5 8 L12 1" fill="none" stroke="#5aa8c8" stroke-width="0.8"/><path d="M6 13 L14 9 M6 11 L14 7" stroke="#8acbe4" stroke-width="1"/></svg>
<div class="a" style="left:803px;top:68px;width:24px;height:24px;background:#d8f0fc;border:1px solid #a8daf4"></div>
<svg class="a" style="left:806px;top:71px" width="20" height="19" viewBox="0 0 20 19"><g stroke="#8a5a1a" stroke-width="1.5" fill="none"><path d="M1 1 L5 5 M5 1 L1 5 M9 1 L8 4 M6 6 L5 9 M3 11 L2 14 M9 15 L12 12 M12 12 L12 7 M12 12 L16 12"/></g><path d="M10.5 8 L12 6 L13.5 8Z M15 10.5 L17 12 L15 13.5Z M8 13 L8 16 L11 16Z" fill="#8a5a1a"/><path d="M16 18 L19 15 L19 18Z" fill="#444"/></svg>
<div class="a" style="left:830px;top:68px;width:23px;height:24px;background:#d8d8d8;border:1px solid #a8a8a8"></div>
<svg class="a" style="left:832px;top:70px" width="19" height="20" viewBox="0 0 19 20"><rect x="0.5" y="0.5" width="9" height="6" fill="#fdf6dc" stroke="#777"/><path d="M9.5 3.5 H15 V9" fill="none" stroke="#444" stroke-width="1.2"/><path d="M12 8 L15 11 L17 6" fill="none" stroke="#222" stroke-width="1.5"/><path d="M8 15 Q12.5 10 17 15 Q12.5 20 8 15Z" fill="#333"/><circle cx="12.5" cy="15" r="1.6" fill="#fff"/></svg>
<svg class="a" style="left:859px;top:71px" width="17" height="17" viewBox="0 0 17 17"><path d="M3.5 3.5 L8 8.5 L13 10 M8 8.5 L3.5 13.5" stroke="#333" stroke-width="1.2" fill="none"/><circle cx="3.5" cy="3" r="2.8" fill="#5aa85a"/><circle cx="13.5" cy="10" r="2.8" fill="#e06060"/><circle cx="3.5" cy="14" r="2.8" fill="#3a8ac0"/></svg>
<svg class="a" style="left:884px;top:71px" width="18" height="17" viewBox="0 0 18 17"><rect x="4" y="0.5" width="7" height="7" fill="#e8e8e8" stroke="#ccc"/><rect x="0.5" y="7.5" width="7" height="7" fill="#e8e8e8" stroke="#ccc"/><rect x="7.5" y="7.5" width="7" height="7" fill="#eee" stroke="#ccc"/><path d="M14 12 L17 14.5 L14 17Z" fill="#ddd"/></svg>
<svg class="a" style="left:911px;top:71px" width="16" height="16" viewBox="0 0 16 16"><circle cx="8" cy="8" r="7.3" fill="#e2e2e2" stroke="#ccc"/><circle cx="7" cy="6.5" r="4" fill="#ececec"/></svg>

</body></html>
